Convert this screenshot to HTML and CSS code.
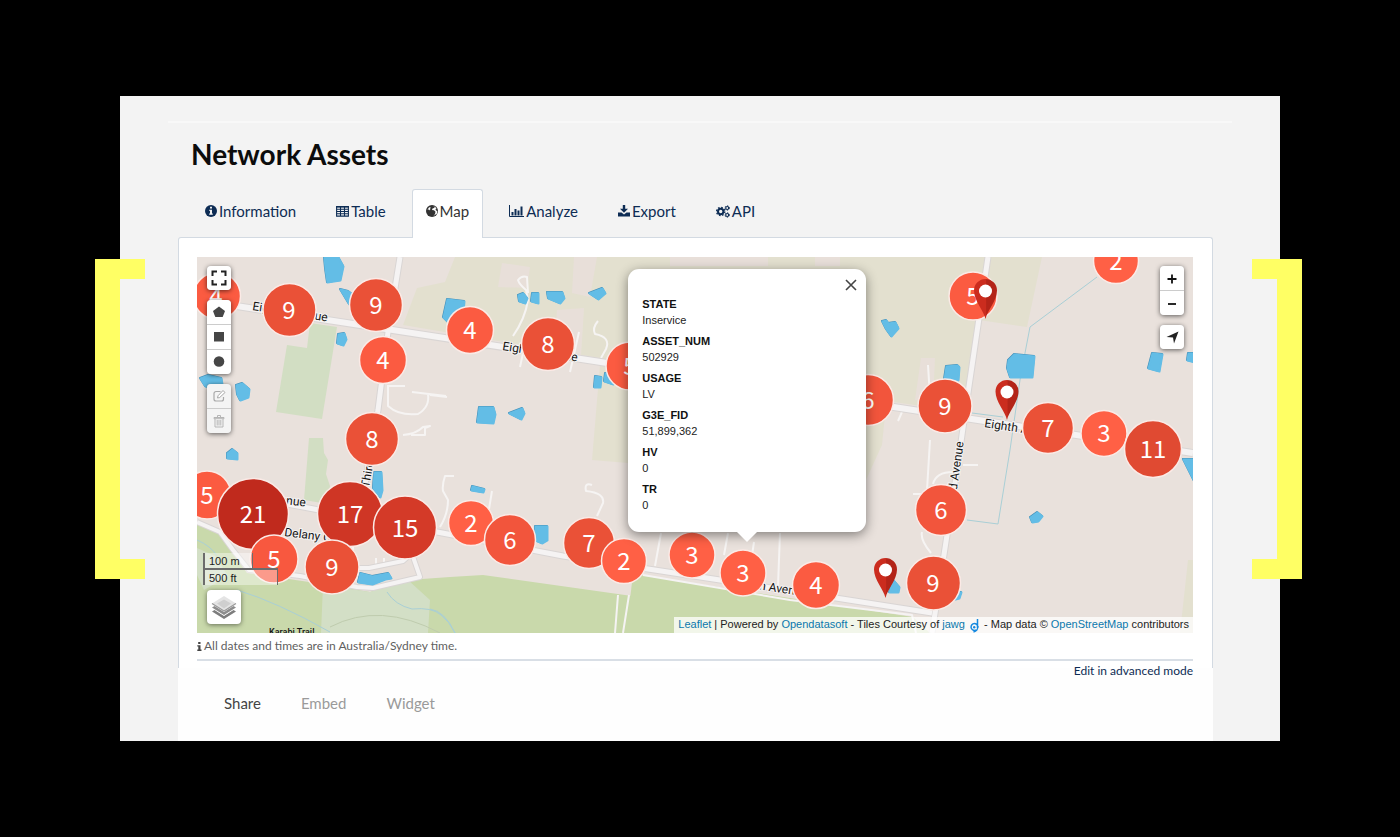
FILE: index.html
```html
<!DOCTYPE html>
<html lang="en">
<head>
<meta charset="utf-8">
<title>Network Assets</title>
<link rel="stylesheet" href="styles.css">
</head>
<body>
<main class="frame">
  <hr class="top-line">
  <div class="content">
    <h1 class="title">Network Assets</h1>
    <nav class="tabs">
      <a class="tab" href="#information"><svg width="12" height="12" viewBox="0 0 12 12"><circle cx="6" cy="6" r="6" fill="currentColor"/><path d="M5 1.8h2v1.7H5zM4.3 4.7H7v3.9h.8v1.2H4.2V8.600H5V5.900h-.7z" fill="#f2f2f2"/></svg>Information</a>
      <a class="tab" href="#table"><svg width="13" height="12" viewBox="0 0 13 12"><path d="M.6 1.600h11.800v9.500H.6zM.6 4.200h11.800M.6 6.500h11.800M.6 8.800h11.800M4.500 1.600v9.500M8.500 1.600v9.500" fill="none" stroke="currentColor" stroke-width="1.100"/><path d="M.4 1h12.200v1.500H.4z" fill="currentColor"/></svg>Table</a>
      <a class="tab active" href="#map" aria-current="page"><svg width="12" height="12" viewBox="0 0 12 12"><circle cx="6" cy="6" r="6" fill="currentColor"/><path d="M6.500 1 9 1.800 8 3 6.500 3.500 6 5l2 .3 1.500 1.500L9 9 7.500 11 11 8.500 11.300 6 10 5.500 9.500 4 10.500 3.500 9.500 2.200zM4 5.500 3 4.500l-1.500.2L3 2.500 4.500 2z" fill="#fff"/></svg>Map</a>
      <a class="tab" href="#analyze"><svg width="15" height="12" viewBox="0 0 15 12"><path d="M.5 0v11.500H15" fill="none" stroke="currentColor"/><path d="M2.500 7h2v3.500h-2zM5.500 4h2v6.500h-2zM8.500 5.500h2v5h-2zM11.500 1.500h2v9h-2z" fill="currentColor"/></svg>Analyze</a>
      <a class="tab" href="#export"><svg width="12" height="12" viewBox="0 0 12 12"><path d="M4.800 0h2.400v3.800H10L6 7.800 2 3.800h2.800zM0 7.500h3.500L6 9.500l2.500-2H12v4H0z" fill="currentColor"/></svg>Export</a>
      <a class="tab" href="#api"><svg width="14" height="13" viewBox="0 0 14 13"><g fill="none" stroke="currentColor"><circle cx="4.700" cy="6.500" r="2.700" stroke-width="2"/><circle cx="4.700" cy="6.500" r="4.100" stroke-width="1.300" stroke-dasharray="1.600 1.620"/><circle cx="11.200" cy="3" r="1.500" stroke-width="1.200"/><circle cx="11.200" cy="3" r="2.300" stroke-width=".8" stroke-dasharray="1.200 1.200"/><circle cx="11.200" cy="10" r="1.500" stroke-width="1.200"/><circle cx="11.200" cy="10" r="2.300" stroke-width=".8" stroke-dasharray="1.200 1.200"/></g></svg>API</a>
    </nav>

    <section class="panel">
      <div class="map">
        <svg class="canvas" viewBox="197 257 996 376" preserveAspectRatio="xMidYMid slice">
          <rect x="197" y="257" width="996" height="376" fill="#e9e1dc"/>
          <g fill="#e3e0cf">
            <path d="M403 325 417 288 445 282 455 257H1042L1027 327 979 320 963 412 866 398 600 358z"/>
            <path d="M600 365h28v98l-36-3zM866 405h20l-4 40-16 35zM1188 560h5v73h-13z"/>
          </g>
          <g fill="#e8dfd9">
            <path d="M502 263l28 4-3 21-29-1zM574 257h23l-7 40-18-4zM557 310l27-2-3 48-27-4zM670 257h98v9h-98zM815 257h25v9h-25zM921 358h14l-2 44-18-2z"/>
          </g>
          <path d="M310 323l27 4-15 92-46-7 11-67 20 3zM309 438h14l1 15 4 7-2 14 4 12-2 12-6 5-18-3z" fill="#d2dec3"/>
          <g fill="#c9d9ab">
            <path d="M197 523l22 10 14 20 14 20 76 11 47 8 38-12 42-3 33-2 149 21V633H197z"/>
            <path d="M633 574 913 617 930 633H626z"/>
          </g>
          <path d="M323 585l47 7 38-12 22 20-2 33H321z" fill="#d3dfc6"/>
          <path d="M197 548 215 556 228 576 204 590 197 575z" fill="#d3dfc6"/>
          <g fill="none" stroke="#a9cfd6">
            <path d="M237 590q40 12 93 42M387 592q8 13 25 17 20-2 29 6 8 6 14 18M430 609q15 2 25 24M197 540q14 6 20 16"/>
            <path d="M1097 277 1030 327 1025 353 1020 380 1010 450 998 524 967 520M972 413l31 4M1193 450l-20-3"/>
            <path d="M330 627q50-26 110 6" stroke="#bfccae"/>
          </g>
          <g class="lane">
            <path d="M513 336q12-17 15-36l-2-10q-7-6-8-10 4-5 9-3l1 16M528 330l-8 37M579 332l-9 40M598 321q-6 7-3 13 16 3 11 15l-5 9"/>
            <path d="M388 385v21q11 10 30 8 12-7 10-20M388 386h17M412 392l34 4M403 435q13-1 20-8l7-1-5 2v7h-14M430 395l17 2"/>
            <path d="M454 476h-9q-3 9-2 15l5 9q0 14-8 27M492 491l-3 18M592 485q-8-3-6 6 19 2 17 12l-6 13M661 533l-6 33M728 533l-4 22M754 542l-3 20M780 533l-2 53M928 365l2 32M902 412l-4 9M930 440l-3 50-2 4-12 0M933 484q3-12 20-12M963 465h15M922 532q-2 8 9 21"/>
            <path d="M370 582l20-7M376 567v-9M384 566v-8M353 545v12"/>
          </g>
          <g class="road-edge">
            <path d="M197 300 1193 453" stroke-width="8"/>
            <path d="M197 492 287 504 437 532 563 556 720 580 932 613" stroke-width="7"/>
            <path d="M400 257 388 332 378 410 360 512M988 257 967 400 957 470 932 633" stroke-width="7"/>
            <path d="M197 522 220 532 233 550 249 570 300 576 357 587 373 588 420 577 410 548M347 568h22l34-7 20-18" stroke-width="6"/>
          </g>
          <g class="road">
            <path d="M197 300 1193 453" stroke-width="6"/>
            <path d="M197 492 287 504 437 532 563 556 720 580 932 613" stroke-width="5"/>
            <path d="M400 257 388 332 378 410 360 512M988 257 967 400 957 470 932 633" stroke-width="5"/>
            <path d="M197 522 220 532 233 550 249 570 300 576 357 587 373 588 420 577 410 548M347 568h22l34-7 20-18" stroke-width="4"/>
            <path d="M643 575 790 600 912 615 916 633M618 595l-3 38M629 595l-6 38" stroke-width="2"/>
          </g>
          <defs>
            <g id="ponds">
              <path d="M324 257h14l5 9-3 14-13 2-2-14zM340 289l8 2 8 6-3 9-4-2zM338 334l6-1 2 6-3 6-6-2zM200 378l8-3 13 3 1 6-7 4-10-2zM236 385l6-2 7 6-1 8-8 3-3-6z"/>
              <path d="M447 299l17 2-2 22-14-1-5-5zM518 295l5-2 4 5-2 5-6-2zM532 293h6v10l-7-2zM547 292h15l2 6-4 5-12-5zM589 293l13-5 3 5-7 6zM595 376l6 1-1 10h-6zM605 373l8 1v10l-9-3zM479 407h14l2 7-2 9-16-1zM509 413l13-5 2 5-3 6zM472 486l12 3-1 3-12-2zM535 526h12v14l-5 3-7-3z"/>
              <path d="M227 453l5-4 5 4v6l-10-1zM374 472h7l1 18-2 7-7-9zM360 573l12 3 16-3 3 5-6 1-13 5-14-2zM882 321l4-1 2 3 7-1 3 6-7 8-5-7zM946 366l11-1 2 2-1 13-14-1zM1014 354l20 2-2 21h-22l-3-9 1-8zM1152 353l10 1-3 17-11-3zM1188 353h7v9l-8-2zM1183 459h12v24zM1030 517l7-5 5 4-4 5-6 1zM893 580l6 7-1 5h-9zM956 592h5l-2 6-4 1z"/>
            </g>
          </defs>
          <use class="pond-edge" href="#ponds"/>
          <use class="pond" href="#ponds" x=".5" y=".5"/>
          <g class="street">
            <text transform="translate(252 310) rotate(8.700)">Eighth Avenue</text>
            <text transform="translate(502 350) rotate(8.700)">Eighth Avenue</text>
            <text transform="translate(984 427) rotate(8.700)">Eighth Avenue</text>
            <text transform="translate(235 498) rotate(7)">Ninth Avenue</text>
            <text transform="translate(284 536) rotate(7)">Delany Ct</text>
            <text transform="translate(737 586) rotate(8.700)">Ninth Avenue</text>
            <text transform="translate(369 488) rotate(-80)">Third Avenue</text>
            <text transform="translate(954 511) rotate(-82)">Third Avenue</text>
            <text class="trail" x="269" y="635">Karabi Trail</text>
          </g>
          <g class="clusters">
            <g fill="#fb5b41">
              <circle cx="217" cy="296" r="23.500"/><circle cx="383" cy="360" r="23.500"/><circle cx="470" cy="330" r="23.500"/><circle cx="630" cy="366" r="24"/><circle cx="207" cy="495" r="24"/><circle cx="816" cy="585" r="23.500"/><circle cx="973" cy="296" r="24"/>
            </g>
            <g fill="#ea5137">
              <circle cx="289.500" cy="310" r="26.500"/><circle cx="376" cy="305" r="26.500"/><circle cx="372" cy="439" r="26.500"/><circle cx="548" cy="344" r="26.500"/><circle cx="945" cy="406" r="27"/><circle cx="933.500" cy="583" r="27"/><circle cx="589" cy="543" r="25.500"/><circle cx="1048" cy="428" r="25.500"/>
            </g>
            <circle cx="253" cy="514" r="35.500" fill="#c02a1d"/>
            <circle cx="350" cy="514" r="32.500" fill="#cf3625"/>
            <circle cx="405" cy="527.500" r="31.500" fill="#d43a28"/>
            <circle cx="274" cy="559" r="24" fill="#f8583f"/>
            <circle cx="332" cy="567" r="27" fill="#ea5137"/>
            <g fill="#ff6045">
              <circle cx="471" cy="523" r="22.500"/><circle cx="624" cy="561" r="22.500"/><circle cx="1116" cy="261" r="22.500"/><circle cx="692" cy="555" r="23"/><circle cx="743" cy="573" r="23"/><circle cx="1104" cy="433.500" r="23"/>
            </g>
            <g fill="#f2553c">
              <circle cx="510" cy="540" r="25.500"/><circle cx="868" cy="400" r="25.500"/><circle cx="941" cy="510" r="25.500"/>
            </g>
            <circle cx="1153" cy="449" r="28.500" fill="#e04a32"/>
          </g>
          <g class="counts">
            <text x="216" y="305">4</text><text x="289" y="319">9</text><text x="376" y="314">9</text><text x="383" y="369">4</text><text x="470" y="339">4</text><text x="372" y="448">8</text><text x="548" y="353">8</text><text x="630" y="375">5</text><text x="207" y="504">5</text><text x="253" y="523">21</text><text x="350" y="523">17</text><text x="405" y="537">15</text><text x="274" y="568">5</text><text x="332" y="576">9</text><text x="471" y="532">2</text><text x="510" y="549">6</text><text x="589" y="552">7</text><text x="624" y="570">2</text><text x="692" y="564">3</text><text x="743" y="582">3</text><text x="816" y="594">4</text><text x="868" y="409">6</text><text x="973" y="305">5</text><text x="945" y="415">9</text><text x="1048" y="437">7</text><text x="1104" y="442">3</text><text x="1153" y="458">11</text><text x="941" y="519">6</text><text x="933" y="592">9</text><text x="1116" y="270">2</text>
          </g>
          <defs>
            <linearGradient id="pin-fill"><stop offset=".5" stop-color="#cb2c1e"/><stop offset=".55" stop-color="#b32418"/></linearGradient>
            <g id="pin"><path d="M0 0C-2-9-11.500-18-11.500-28.500a11.500 11.500 0 0 1 23 0C11.500-18 2-9 0 0z" fill="url(#pin-fill)"/><circle cy="-28" r="6.500" fill="#fff"/></g>
          </defs>
          <use href="#pin" x="985.500" y="319"/><use href="#pin" x="1007" y="420"/><use href="#pin" x="885.500" y="598"/>
        </svg>

        <div class="controls controls-left">
          <div class="bar"><button aria-label="Full screen"><svg width="16" height="16" viewBox="0 0 16 16"><path d="M1.500 6V1.500H6M10 1.500h4.500V6M14.500 10v4.500H10M6 14.500H1.500V10" fill="none" stroke="#222" stroke-width="2"/></svg></button></div>
          <div class="bar">
            <button aria-label="Draw a polygon"><svg width="12" height="12" viewBox="0 0 12 12"><path d="M6 .5 12 5 9.700 11H2.300L0 5z" fill="#464646"/></svg></button>
            <button aria-label="Draw a rectangle"><svg width="12" height="12" viewBox="0 0 12 12"><path d="M1 1h10v9.500H1z" fill="#464646"/></svg></button>
            <button aria-label="Draw a circle"><svg width="12" height="12" viewBox="0 0 12 12"><circle cx="6" cy="5.500" r="5.300" fill="#464646"/></svg></button>
          </div>
          <div class="bar disabled">
            <button disabled aria-label="Edit layers"><svg width="14" height="14" viewBox="0 0 14 14"><path d="M8.500 2.500H4a2 2 0 0 0-2 2V10a2 2 0 0 0 2 2h5.500a2 2 0 0 0 2-2V8" fill="none" stroke="#a9a9a9" stroke-width="1.200"/><path d="M5.500 9 6 6.800l5-5.300 2 2-5.300 5z" fill="#fff" stroke="#a9a9a9"/></svg></button>
            <button disabled aria-label="Delete layers"><svg width="14" height="14" viewBox="0 0 14 14"><path d="M2 3.500h10v1.200H2zM5.500 3V1.500h3V3M3 5v8h8V5M5.200 6v5.500M7 6v5.500M8.800 6v5.500" fill="none" stroke="#b5b5b5" stroke-width="1"/></svg></button>
          </div>
        </div>

        <div class="controls controls-right">
          <div class="bar">
            <button aria-label="Zoom in"><svg width="10" height="12" viewBox="0 0 10 12"><path d="M5 2.500v9M.5 7h9" stroke="#111" stroke-width="1.800"/></svg></button>
            <button aria-label="Zoom out"><svg width="10" height="12" viewBox="0 0 10 12"><path d="M1 7h8" stroke="#111" stroke-width="1.800"/></svg></button>
          </div>
          <div class="bar"><button aria-label="Locate me"><svg width="13" height="13" viewBox="0 0 13 13"><path d="M12.500.5 8 12.500 7 6.500.5 6z" fill="#222"/></svg></button></div>
        </div>

        <div class="controls controls-bottom">
          <div class="scale"><span class="metric">100 m</span><span class="imperial">500 ft</span></div>
          <button class="layers" aria-label="Layers"><svg width="26" height="26" viewBox="0 0 26 26"><path d="M1 17.500 13 25l12-7.500-2.500-1.500L13 22 3.500 16z" fill="#7d7d7d"/><path d="M2 14 13 21l11-7" fill="none" stroke="#fff"/><path d="M1 13.500 13 21l12-7.500-2.500-1.500L13 18 3.500 12z" fill="#8d8d8d"/><path d="M1 9.500 13 17l12-7.500L13 2z" fill="#e4e4e4"/><path d="M6 9.500 13 5.500l7 4-7 5z" fill="#cfcfcf"/><path d="M1 9.500 13 17l12-7.500" fill="none" stroke="#999" stroke-width="1.200"/></svg></button>
        </div>

        <div class="popup" role="dialog" aria-label="Asset">
          <button class="close" aria-label="Close"><svg width="12" height="12" viewBox="0 0 12 12"><path d="M1 1l10 10M11 1 1 11" stroke="#444" stroke-width="1.600"/></svg></button>
          <dl class="fields">
            <div><dt>STATE</dt><dd>Inservice</dd></div>
            <div><dt>ASSET_NUM</dt><dd>502929</dd></div>
            <div><dt>USAGE</dt><dd>LV</dd></div>
            <div><dt>G3E_FID</dt><dd>51,899,362</dd></div>
            <div><dt>HV</dt><dd>0</dd></div>
            <div><dt>TR</dt><dd>0</dd></div>
          </dl>
        </div>

        <div class="attribution"><a href="#leaflet">Leaflet</a> | Powered by <a href="#ods">Opendatasoft</a> - Tiles Courtesy of <a href="#jawg">jawg <svg class="jawg" width="11" height="15" viewBox="0 0 11 15"><path d="M8.500 1v9M8.500 7.500A3.400 3.400 0 1 0 7 12" fill="none" stroke="#1689e0" stroke-width="1.500"/><circle cx="5.200" cy="9.300" r="1.200" fill="#1689e0"/><path d="M9 8q0 5-4.500 6" fill="none" stroke="#1689e0" stroke-width="1.300"/></svg></a> - Map data © <a href="#osm">OpenStreetMap</a> contributors</div>
      </div>
      <p class="note"><svg width="5" height="9" viewBox="0 0 5 9"><path d="M1.200 0h2.300v2H1.200zM.3 3.200h3.200v4.300h1V9H.3V7.500h1V4.600h-1z" fill="#444"/></svg>All dates and times are in Australia/Sydney time.</p>
      <div class="rule"></div>
    </section>
    <section class="lower">
      <a class="advanced" href="#advanced">Edit in advanced mode</a>
      <nav class="share">
        <a class="current" href="#share">Share</a>
        <a href="#embed">Embed</a>
        <a href="#widget">Widget</a>
      </nav>
    </section>
  </div>
</main>
</body>
</html>
```
FILE: styles.css
```css
*,
*::before,
*::after { box-sizing: border-box; }

body {
  margin: 0;
  padding: 96px 120px;
  background: #000;
  font-family: Lato, "Open Sans", sans-serif;
  color: #1b1b1b;
}

a { text-decoration: none; }

button {
  display: flex;
  align-items: center;
  justify-content: center;
  padding: 0;
  border: 0;
  background: #fff;
}

.frame {
  position: relative;
  padding-top: 25px;
  background: #f3f3f3;
}

.frame::before,
.frame::after {
  content: "";
  position: absolute;
  z-index: 2;
  top: 163px;
  bottom: 162px;
  width: 50px;
  border: solid #ffff64;
}

.frame::before { left: -25px; border-width: 20px 0 20px 25px; }
.frame::after { right: -22px; border-width: 20px 25px 20px 0; }

.top-line {
  height: 2px;
  margin: 0 48px;
  border: 0;
  background: #f8f8f8;
}

.content { padding: 0 67px 0 58px; }

.title {
  margin: 0;
  padding: 15px 13px 18px;
  font-size: 28px;
  font-weight: 700;
  line-height: 33px;
  color: #0c0c0c;
}

.tabs {
  display: flex;
  gap: 12px;
  padding-left: 13px;
}

.tab {
  display: flex;
  align-items: center;
  gap: 2px;
  height: 49px;
  padding: 0 13px 6px;
  border: 1px solid transparent;
  border-bottom: 0;
  font-size: 15px;
  color: #0d2c54;
}

.tab.active {
  position: relative;
  z-index: 1;
  border-color: #d3dae2;
  border-radius: 3px 3px 0 0;
  background: #fff;
  color: #333;
}

.panel {
  margin-top: -1px;
  padding: 19px 19px 7px 18px;
  border: 1px solid #d3dae2;
  border-bottom: 0;
  border-radius: 3px 3px 0 0;
  background: #fff;
}

.map {
  position: relative;
  aspect-ratio: 996 / 376;
  overflow: hidden;
  font-family: "Liberation Sans", Arial, sans-serif;
  font-size: 11px;
}

.canvas {
  display: block;
  width: 100%;
  height: 100%;
}

.lane { fill: none; stroke: #f6f4f3; stroke-width: 2; stroke-linejoin: round; }
.road-edge { fill: none; stroke: #d9d5d4; stroke-linejoin: round; }
.road { fill: none; stroke: #f5f3f3; stroke-linejoin: round; }

.pond,
.pond-edge {
  stroke-width: 2;
  stroke-linejoin: round;
}

.pond { fill: #63bde6; stroke: #63bde6; }
.pond-edge { fill: #4590b8; stroke: #4590b8; }

.street {
  font-family: Roboto, sans-serif;
  font-size: 12px;
  fill: #151515;
  stroke: #f5f3f3;
  stroke-width: 2;
  paint-order: stroke;
}

.trail { font-size: 9px; font-weight: 500; stroke: none; }

.clusters { stroke: #fbeae6; stroke-width: 1.5; }

.counts {
  font-family: "Noto Sans CJK SC", sans-serif;
  font-size: 24px;
  text-anchor: middle;
  fill: #fff;
}

.controls {
  position: absolute;
  display: flex;
  flex-direction: column;
  gap: 10px;
}

.controls-left { top: 9px; left: 10px; }
.controls-right { top: 9px; right: 9px; }
.controls-bottom { bottom: 9px; left: 6px; gap: 5px; }

.bar {
  display: flex;
  flex-direction: column;
  gap: 1px;
  border-radius: 4px;
  background: #ccc;
  box-shadow: 0 1px 5px rgba(0, 0, 0, 0.6);
}

.bar button { width: 24px; height: 24px; }
.bar button:first-child { border-radius: 4px 4px 0 0; }
.bar button:last-child { border-radius: 0 0 4px 4px; }
.bar button:only-child { border-radius: 4px; }
.disabled button { background: #f4f4f4; }

.scale {
  display: flex;
  flex-direction: column;
  align-items: flex-start;
  color: #222;
}

.metric,
.imperial {
  padding: 1px 0 0 4px;
  border: 1px solid #6c6c6c;
  border-width: 0 1px 0 2px;
  background: rgba(255, 255, 255, 0.4);
  line-height: 14px;
}

.metric { width: 50px; }
.imperial { width: 75px; border-top-width: 2px; }

.layers {
  width: 34px;
  height: 34px;
  margin-left: 4px;
  border-radius: 4px;
  box-shadow: 0 1px 5px rgba(0, 0, 0, 0.5);
}

.popup {
  position: absolute;
  top: 12px;
  left: 43.3%;
  width: 238px;
  padding: 27px 14px 19px;
  border-radius: 11px;
  background: #fff;
  box-shadow: 0 3px 12px rgba(0, 0, 0, 0.45);
}

.popup::after {
  content: "";
  position: absolute;
  top: 100%;
  left: 50%;
  margin-left: -10px;
  border: solid transparent;
  border-width: 10px 10px 0;
  border-top-color: #fff;
}

.close {
  position: absolute;
  top: 10px;
  right: 9px;
}

.fields {
  display: flex;
  flex-direction: column;
  gap: 5px;
  margin: 0;
  line-height: 16px;
  color: #222;
}

.fields dt { font-weight: 700; color: #111; }
.fields dd { margin: 0; }

.attribution {
  position: absolute;
  right: 0;
  bottom: 0;
  padding: 0 4px;
  background: rgba(255, 255, 255, 0.75);
  line-height: 15px;
  color: #222;
}

.attribution a { color: #0b78ad; }
.jawg { margin: 0 1px; vertical-align: middle; }

.note {
  display: flex;
  align-items: center;
  gap: 2px;
  margin: 0;
  font-size: 12px;
  line-height: 26px;
  color: #5f5f5f;
}

.rule { height: 2px; background: #d9dfe6; }

.lower {
  display: flex;
  flex-direction: column;
  padding: 0 20px 28px 19px;
  background: #fefefe;
}

.advanced {
  align-self: flex-end;
  font-size: 12px;
  line-height: 6px;
  color: #0d2c54;
}

.share {
  display: flex;
  gap: 40px;
  padding: 19px 27px 0;
  font-size: 15px;
  line-height: 20px;
}

.share a { color: #9a9a9a; }
.share .current { color: #444; }
```
